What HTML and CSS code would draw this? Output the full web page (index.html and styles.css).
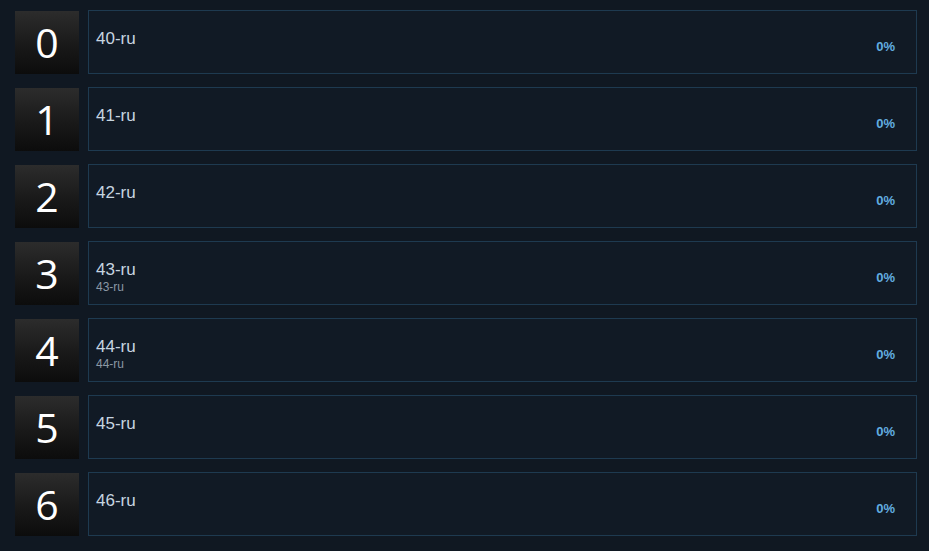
FILE: index.html
```html
<!DOCTYPE html>
<html>
<head>
<meta charset="utf-8">
<link rel="stylesheet" href="styles.css">
</head>
<body>
<div class="list">
  <div class="row"><div class="num">0</div><div class="card"><div class="info"><div class="title">40-ru</div></div><div class="pct">0%</div></div></div>
  <div class="row"><div class="num">1</div><div class="card"><div class="info"><div class="title">41-ru</div></div><div class="pct">0%</div></div></div>
  <div class="row"><div class="num">2</div><div class="card"><div class="info"><div class="title">42-ru</div></div><div class="pct">0%</div></div></div>
  <div class="row"><div class="num">3</div><div class="card"><div class="info"><div class="title">43-ru</div><div class="sub">43-ru</div></div><div class="pct">0%</div></div></div>
  <div class="row"><div class="num">4</div><div class="card"><div class="info"><div class="title">44-ru</div><div class="sub">44-ru</div></div><div class="pct">0%</div></div></div>
  <div class="row"><div class="num">5</div><div class="card"><div class="info"><div class="title">45-ru</div></div><div class="pct">0%</div></div></div>
  <div class="row"><div class="num">6</div><div class="card"><div class="info"><div class="title">46-ru</div></div><div class="pct">0%</div></div></div>
</div>
</body>
</html>
```
FILE: styles.css
```css
html, body {
  margin: 0;
  padding: 0;
  background: #101822;
  width: 929px;
  height: 551px;
  overflow: hidden;
}
.list {
  display: flex;
  flex-direction: column;
  gap: 13px;
  padding: 10px 12px 0 15px;
}
.row {
  display: flex;
  gap: 9px;
  height: 64px;
}
.num {
  width: 64px;
  height: 63px;
  margin-top: 1px;
  flex: none;
  background: linear-gradient(to bottom, #2c2c2c 0%, #191919 55%, #0c0c0c 100%);
  color: #ffffff;
  font-family: "Open Sans", "Noto Sans", sans-serif;
  font-size: 41px;
  line-height: 63px;
  text-align: center;
}
.card {
  flex: 1;
  box-sizing: border-box;
  height: 64px;
  border: 1px solid #1e3a50;
  background: #111a25;
  display: flex;
  padding: 18px 21px 0 7px;
}
.info {
  flex: 1;
  font-family: "Liberation Sans", Arial, sans-serif;
}
.title {
  color: #c7d5e0;
  font-size: 17px;
  line-height: 20px;
}
.sub {
  color: #8b98a5;
  font-size: 12px;
  line-height: 13px;
  margin-top: 1px;
}
.pct {
  font-family: "Liberation Sans", Arial, sans-serif;
  font-weight: bold;
  font-size: 13px;
  color: #62aee0;
  margin-top: 10px;
  line-height: 15px;
}
```
